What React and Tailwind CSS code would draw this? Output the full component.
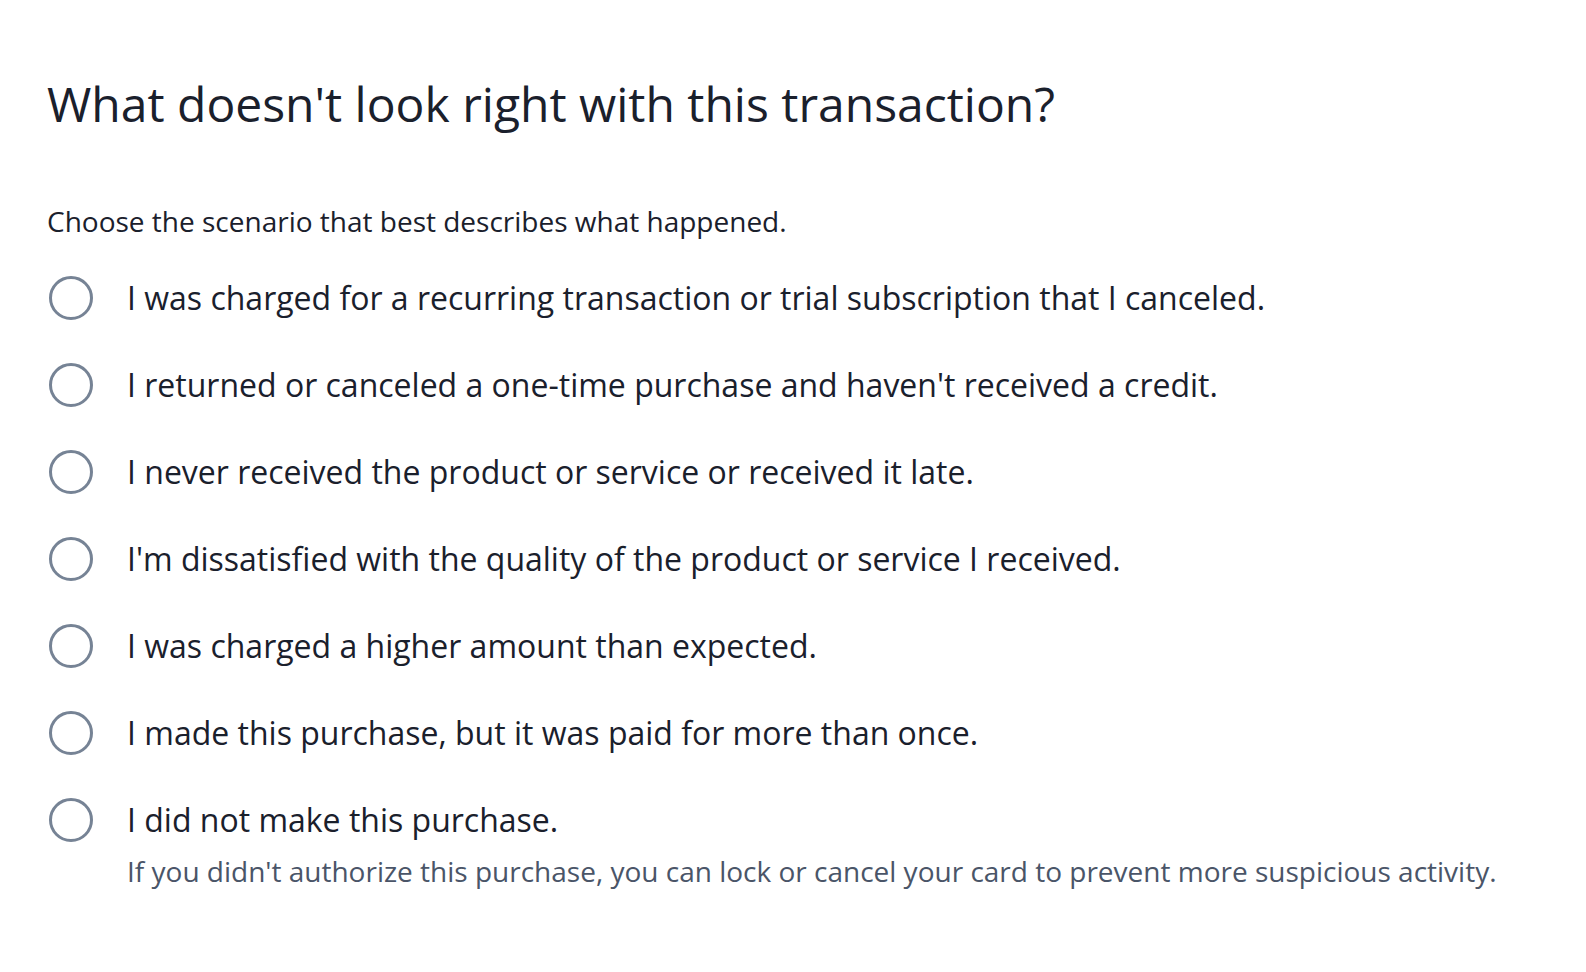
import React, { useState } from "react";

const options = [
  "I was charged for a recurring transaction or trial subscription that I canceled.",
  "I returned or canceled a one-time purchase and haven't received a credit.",
  "I never received the product or service or received it late.",
  "I'm dissatisfied with the quality of the product or service I received.",
  "I was charged a higher amount than expected.",
  "I made this purchase, but it was paid for more than once.",
  "I did not make this purchase.",
];

export default function App() {
  const [picked, setPicked] = useState(null);

  return (
    <div className="min-h-screen bg-white text-[#1a202c] font-['Open_Sans',sans-serif] px-[47px] pt-[75px]">
      <h1 className="text-[48px] leading-[58px] font-normal">
        What doesn't look right with this transaction?
      </h1>

      <p className="mt-[70px] text-[28px] leading-[36px]">
        Choose the scenario that best describes what happened.
      </p>

      <div className="mt-[37px] flex flex-col gap-[43px]">
        {options.map((text, i) => (
          <label key={i} className="flex items-start gap-[34px] cursor-pointer">
            <span
              onClick={() => setPicked(i)}
              className="ml-[2px] w-[44px] h-[44px] shrink-0 rounded-full border-[3.5px] border-[#768395] flex items-center justify-center"
            >
              {picked === i && (
                <span className="w-[22px] h-[22px] rounded-full bg-[#768395]" />
              )}
            </span>
            <span className="flex flex-col">
              <span className="text-[32px] leading-[44px]">{text}</span>
              {i === options.length - 1 && (
                <span className="mt-[11px] text-[28px] leading-[36px] text-[#4a5568]">
                  If you didn't authorize this purchase, you can lock or cancel your card to prevent more suspicious activity.
                </span>
              )}
            </span>
          </label>
        ))}
      </div>
    </div>
  );
}
